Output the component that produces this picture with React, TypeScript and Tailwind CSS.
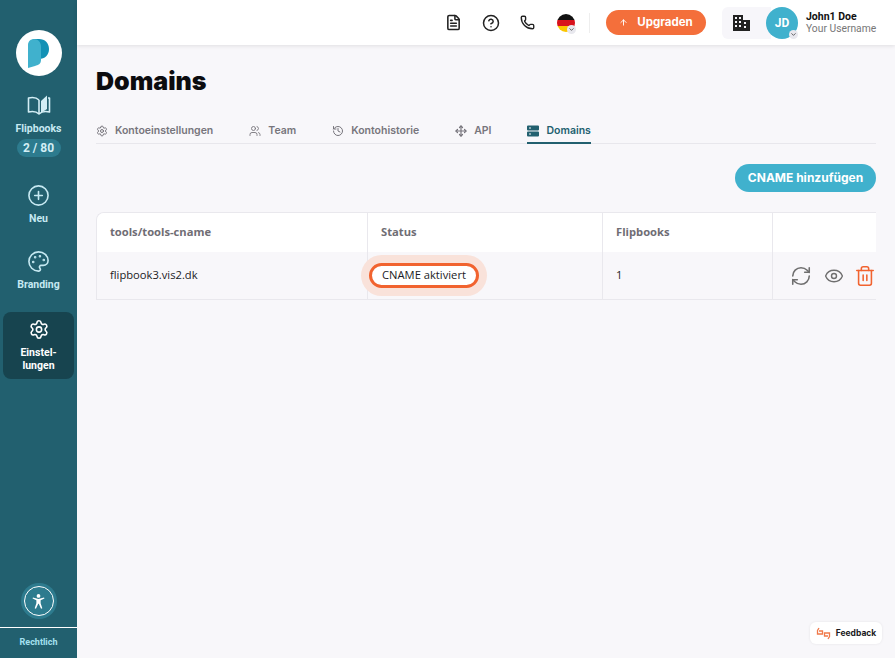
import { CirclePlus, Palette, Settings, FileText, CircleHelp, Phone, Users, History, Move, RefreshCw, Eye, Trash2, ChevronDown, ArrowUp } from "lucide-react";

const mont = "font-['Inter','Liberation_Sans',sans-serif]";
const open = "font-['Open_Sans','Noto_Sans',sans-serif]";

function Logo() {
  return (
    <div className="w-[46px] h-[46px] rounded-full bg-white flex items-center justify-center">
      <svg width="21" height="29" viewBox="0 0 21 29">
        <path d="M5 0 H11 C17 0 21 4 21 10 C21 16 17 20 11 20 L11 24 L3 24 Z" fill="#1391b5" />
        <path d="M0 6 C0 2 3 0 6 0 C10 0 13 3 13 8 V21 C13 25 10 26 7 27 L0 29 Z" fill="#40b1cd" />
      </svg>
    </div>
  );
}

function BookIcon() {
  return (
    <svg width="24" height="22" viewBox="0 0 24 22" fill="none" stroke="#d3eef5" strokeWidth="1.6" strokeLinejoin="round">
      <path d="M12 6 C10 4 6 3 1.500 4 V18 C6 17 10 18 12 20 C14 18 18 17 22.500 18 V4 L21 4" />
      <path d="M12 6 V20" />
      <path d="M14 7 L20 1.500 V15 L14 19 Z" fill="#d3eef5" stroke="none" />
    </svg>
  );
}

function NavItem({ icon, label, active, tight }: { icon: React.ReactNode; label: React.ReactNode; active?: boolean; tight?: boolean }) {
  return (
    <div className={`w-[71px] flex flex-col items-center rounded-lg ${active ? "bg-[#17444f] text-white py-[7px] h-[67px]" : "text-[#c6e9f2]"}`}>
      {icon}
      <div className={`text-[10.5px] font-bold leading-[13px] text-center font-['Roboto',sans-serif] ${tight ? "mt-[5px]" : "mt-[6px]"}`}>{label}</div>
    </div>
  );
}

function Tab({ icon, label, active }: { icon: React.ReactNode; label: string; active?: boolean }) {
  return (
    <div className={`h-[28px] flex items-start gap-[7px] pt-[8px] border-b-2 ${active ? "border-[#22606f] text-[#22606f]" : "border-transparent text-[#77757c]"}`}>
      {icon}
      <span className={`text-[10.5px] font-semibold leading-[13px] ${mont}`}>{label}</span>
    </div>
  );
}

function Caret() {
  return (
    <span className="absolute -right-[1px] -bottom-[2px] w-[9px] h-[9px] rounded-full bg-[#e8e8ee] flex items-center justify-center">
      <ChevronDown size={7} strokeWidth={2.5} className="text-[#333]" />
    </span>
  );
}

export default function App() {
  return (
    <div className="w-[895px] h-[658px] flex overflow-hidden bg-[#f8f7fa] relative">
      <aside className="w-[77px] h-full bg-[#22606f] flex flex-col items-center shrink-0">
        <div className="mt-[30px]"><Logo /></div>
        <div className="mt-[18px]"><NavItem icon={<BookIcon />} label="Flipbooks" /></div>
        <div className="mt-[4px] w-[44px] h-[18px] rounded-full bg-[#2d7b8e] text-[#d3eef5] text-[12px] font-bold flex items-center justify-center font-['Roboto',sans-serif]">2 / 80</div>
        <div className="mt-[27px]"><NavItem tight icon={<CirclePlus size={23} strokeWidth={1.7} />} label="Neu" /></div>
        <div className="mt-[25px]"><NavItem tight icon={<Palette size={23} strokeWidth={1.7} />} label="Branding" /></div>
        <div className="mt-[21px]"><NavItem active icon={<Settings size={22} strokeWidth={1.8} />} label={<>Einstel-<br />lungen</>} /></div>
        <div className="mt-auto w-[36px] h-[36px] rounded-full bg-[#2d7b8e] flex items-center justify-center">
          <div className="w-[30px] h-[30px] rounded-full border-[1.5px] border-white flex items-center justify-center">
            <svg width="17" height="17" viewBox="0 0 20 20" fill="white">
              <circle cx="10" cy="3.500" r="2.200" />
              <path d="M3 6.500 L3.500 5.300 L10 7 L16.500 5.300 L17 6.500 L12.500 8.500 V12 L14.500 18 L13 18.600 L10.300 12.700 H9.700 L7 18.600 L5.500 18 L7.500 12 V8.500 Z" />
            </svg>
          </div>
        </div>
        <div className="w-full mt-[8px] border-t border-white h-[31px] flex items-center justify-center text-[#a5e0f0] text-[9px] font-bold font-['Roboto',sans-serif]">Rechtlich</div>
      </aside>

      <div className="flex-1 flex flex-col min-w-0">
        <header className="h-[45px] bg-white shadow-[0_1px_4px_rgba(0,0,0,0.1)] flex items-center pr-[19px] shrink-0 justify-end">
          <FileText size={17} strokeWidth={2.2} className="text-[#222]" />
          <CircleHelp size={18} strokeWidth={2} className="text-[#222] ml-[20px]" />
          <Phone size={15} strokeWidth={2.2} className="text-[#222] ml-[20px]" />
          <div className="relative ml-[22px] w-[18px] h-[18px]">
            <svg width="18" height="18" viewBox="0 0 18 18" className="rounded-full">
              <rect width="18" height="6" fill="#111" />
              <rect y="6" width="18" height="6" fill="#d8121c" />
              <rect y="12" width="18" height="6" fill="#fbc600" />
            </svg>
            <Caret />
          </div>
          <div className="w-px h-[20px] bg-[#eeeeee] ml-[14px]" />
          <button className={`ml-[16px] w-[100px] h-[25px] rounded-full bg-[#f46f3b] text-white flex items-center justify-center gap-[9px] text-[11.5px] font-bold ${mont}`}>
            <ArrowUp size={9} strokeWidth={2.5} />Upgraden
          </button>
          <div className="ml-[16px] w-[49px] h-[32px] pr-[10px] rounded-l-md bg-[#f7f6fa] flex items-center justify-center -mr-[5px]">
            <svg width="17" height="16" viewBox="0 0 17 16" fill="#222">
              <path fillRule="evenodd" d="M0 0 H10 V5 H17 V16 H0 Z M2 2 V4 H4 V2 Z M6 2 V4 H8 V2 Z M2 6 V8 H4 V6 Z M6 6 V8 H8 V6 Z M11 7 V9 H13 V7 Z M2 10 V12 H4 V10 Z M6 10 V12 H8 V10 Z M11 11 V13 H13 V11 Z" />
            </svg>
          </div>
          <div className="relative w-[32px] h-[32px] rounded-full bg-[#40b1cd] text-white flex items-center justify-center text-[12px] font-bold font-['Roboto',sans-serif]">
            JD
            <span className="absolute right-0 bottom-0 w-[9px] h-[9px] rounded-full bg-[#e8e8ee] flex items-center justify-center"><ChevronDown size={7} strokeWidth={2.5} className="text-[#333]" /></span>
          </div>
          <div className="ml-[8px] w-[70px] flex flex-col font-['Roboto',sans-serif] whitespace-nowrap">
            <span className="text-[10.5px] leading-[12px] font-bold text-[#111]">John1 Doe</span>
            <span className="text-[10.3px] leading-[12px] text-[#777]">Your Username</span>
          </div>
        </header>

        <main className="flex-1 pl-[19px] pr-[19px] relative min-h-0">
          <h1 className={`text-[25px] leading-[28px] font-black text-[#0c0c0f] mt-[22px] ${mont}`}>Domains</h1>
          <nav className="mt-[21px] h-[28px] flex gap-[36px] border-b border-[#e8e7ec]">
            <Tab icon={<Settings size={12} strokeWidth={2} className="mt-[1px]" />} label="Kontoeinstellungen" />
            <Tab icon={<Users size={12} strokeWidth={1.8} className="mt-[1px]" />} label="Team" />
            <Tab icon={<History size={12} strokeWidth={2} className="mt-[1px]" />} label="Kontohistorie" />
            <Tab icon={<Move size={12} strokeWidth={2.4} className="mt-[1px]" />} label="API" />
            <Tab active icon={
              <svg width="12" height="12" viewBox="0 0 12 12" fill="#22606f" className="mt-[1px]">
                <path fillRule="evenodd" d="M1 0.500 H11 A1 1 0 0 1 12 1.500 V4.500 A1 1 0 0 1 11 5.500 H1 A1 1 0 0 1 0 4.500 V1.500 A1 1 0 0 1 1 0.500 Z M2 2.500 V3.500 H4 V2.500 Z" />
                <path fillRule="evenodd" d="M1 6.500 H11 A1 1 0 0 1 12 7.500 V10.500 A1 1 0 0 1 11 11.500 H1 A1 1 0 0 1 0 10.500 V7.500 A1 1 0 0 1 1 6.500 Z M2 8.500 V9.500 H4 V8.500 Z" />
              </svg>
            } label="Domains" />
          </nav>
          <div className="flex justify-end mt-[20px]">
            <button className={`w-[141px] h-[28px] rounded-full bg-[#40b1cd] text-white text-[12px] font-bold ${mont}`}>CNAME hinzufügen</button>
          </div>
          <div className={`mt-[20px] border-l border-y border-[#e9e8ed] rounded-tl-lg overflow-hidden text-[11.2px] ${open}`}>
            <div className="grid grid-cols-[271px_235px_170px_1fr] h-[39px] bg-white items-stretch text-[#6f6d74] font-bold">
              <div className="pl-[13px] flex items-center border-r border-[#e9e8ed]">tools/tools-cname</div>
              <div className="pl-[13px] flex items-center border-r border-[#e9e8ed]">Status</div>
              <div className="pl-[13px] flex items-center border-r border-[#e9e8ed]">Flipbooks</div>
              <div />
            </div>
            <div className="grid grid-cols-[271px_235px_170px_1fr] h-[47px] items-stretch text-[#1b1b25]">
              <div className="pl-[13px] flex items-center border-r border-[#e9e8ed]">flipbook3.vis2.dk</div>
              <div className="pl-[1px] flex items-center border-r border-[#e9e8ed]">
                <span className="w-[110px] h-[25px] rounded-full border-[3px] border-[#f1632f] bg-white flex items-center justify-center shadow-[0_0_0_8px_#f9e2da]">CNAME aktiviert</span>
              </div>
              <div className="pl-[13px] flex items-center border-r border-[#e9e8ed]">1</div>
              <div className="flex items-center justify-end gap-[10px] text-[#6f6f6f]">
                <RefreshCw size={22} strokeWidth={1.7} className="mr-[2px]" />
                <Eye size={20} strokeWidth={1.7} />
                <Trash2 size={22} strokeWidth={1.7} className="text-[#f1632f] shrink-0" />
              </div>
            </div>
          </div>
          <div className={`absolute right-[13px] bottom-[14px] w-[72px] h-[22px] bg-white rounded-md shadow-[0_0_3px_rgba(0,0,0,0.08)] flex items-center justify-center gap-[5px] text-[8.5px] font-bold text-[#1a1a22] ${mont}`}>
            <svg width="15" height="13" viewBox="0 0 15 13" fill="none" stroke="#f0794a" strokeWidth="1.3">
              <path d="M3 1 L1.500 3.500 V7 H6.500 V4 H3" />
              <path d="M12 12 L13.500 9.500 V6 H8.500 V9 H12" />
            </svg>
            Feedback
          </div>
        </main>
      </div>
    </div>
  );
}
